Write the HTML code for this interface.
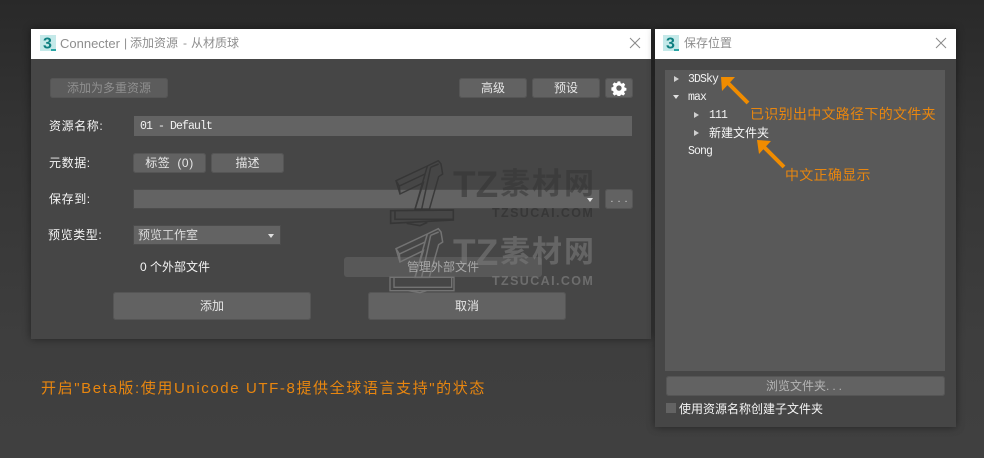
<!DOCTYPE html>
<html lang="zh-CN"><head><meta charset="utf-8">
<style>
html,body{margin:0;padding:0}
body{width:984px;height:458px;overflow:hidden;position:relative;background:linear-gradient(#292929 0,#333 120px,#3e3e3e 340px,#404040 458px);font-family:"Liberation Sans","WenQuanYi Zen Hei","Noto Sans CJK SC",sans-serif;font-size:12px;color:#f0f0f0}
.a{position:absolute;white-space:nowrap}
.win{position:absolute;background:#464646;box-shadow:0 0 8px rgba(0,0,0,.45)}
.bar{position:absolute;height:30px;background:#fff}
.ttl{position:absolute;color:#8e8e8e;font-size:12px;line-height:15px;white-space:nowrap}
.btn{position:absolute;background:#626262;border-radius:3px;box-shadow:inset 0 0 0 1px #555;text-align:center;color:#e6e6e6;white-space:nowrap}
.field{position:absolute;background:#636363}
.lab{position:absolute;color:#f4f4f4;line-height:16px;white-space:nowrap;letter-spacing:.6px}
.mono{font-family:"Liberation Mono","WenQuanYi Zen Hei",monospace;font-size:11.5px;letter-spacing:-.9px;color:#f2f2f2;line-height:14px;position:absolute;white-space:nowrap}
.or{position:absolute;color:#e8860f;white-space:nowrap;line-height:16px;font-size:14px;letter-spacing:.3px}
.tri{position:absolute;width:0;height:0}
.r{border-left:5px solid #cfcfcf;border-top:3px solid transparent;border-bottom:3px solid transparent}
.d{border-top:4px solid #e0e0e0;border-left:3.5px solid transparent;border-right:3.5px solid transparent}
</style></head><body>

<div class="win" style="left:31px;top:29px;width:620px;height:310px"></div>
<div class="bar" style="left:31px;top:29px;width:620px"></div>
<svg class="a" style="left:40px;top:35px" width="16" height="16" viewBox="0 0 16 16"><rect width="16" height="16" fill="#c4e9e9"/><text x="3" y="13.5" font-family="Liberation Sans" font-weight="700" font-size="16" fill="#0f8081">3</text><rect x="11" y="14" width="5" height="2" fill="#2aa5a5"/></svg>
<div class="ttl" style="left:60px;top:36px;font-size:13px">Connecter</div>
<div class="ttl" style="left:124px;top:36px">|</div>
<div class="ttl" style="left:130px;top:36px">添加资源</div>
<div class="ttl" style="left:183px;top:36px">-</div>
<div class="ttl" style="left:191px;top:36px">从材质球</div>
<svg class="a" style="left:629px;top:37px" width="12" height="12"><path d="M1 1L11 11M11 1L1 11" stroke="#8a8a8a" stroke-width="1" fill="none"/></svg>

<div class="btn" style="left:50px;top:78px;width:118px;height:20px;line-height:20px;color:#8f8f8f;background:#5c5c5c">添加为多重资源</div>
<div class="btn" style="left:459px;top:78px;width:68px;height:20px;line-height:20px">高级</div>
<div class="btn" style="left:532px;top:78px;width:68px;height:20px;line-height:20px">预设</div>
<div class="btn" style="left:605px;top:78px;width:28px;height:20px"></div>
<svg class="a" style="left:611px;top:80px" width="16" height="16" viewBox="0 0 16 16"><path fill="#fff" fill-rule="evenodd" d="M6.6 .8h2.8l.4 2 1.3.6 1.8-1 1.9 2.1-1.1 1.7.4 1.3 2 .5v2.8l-2 .5-.5 1.3 1.1 1.7-2 2-1.7-1.1-1.3.5-.4 1.9H6.6l-.5-1.9-1.3-.5-1.7 1.1-2-2 1.1-1.7-.5-1.3-1.9-.5V7.5l1.9-.5.5-1.3-1.1-1.7 2-2.1 1.7 1 1.3-.6zM8 5.2a2.9 2.9 0 1 0 0 5.8 2.9 2.9 0 0 0 0-5.8z" transform="translate(0.6 0.6) scale(.92)"/></svg>

<div class="lab" style="left:49px;top:118px">资源名称:</div>
<div class="field" style="left:134px;top:116px;width:498px;height:20px"></div>
<div class="mono" style="left:140px;top:120px">01 - Default</div>

<div class="lab" style="left:49px;top:155px">元数据:</div>
<div class="btn" style="left:133px;top:153px;width:73px;height:20px;line-height:20px;word-spacing:3px;letter-spacing:.6px">标签 (0)</div>
<div class="btn" style="left:211px;top:153px;width:73px;height:20px;line-height:20px">描述</div>

<div class="lab" style="left:49px;top:191px">保存到:</div>
<div class="field" style="left:133px;top:189px;width:467px;height:20px;box-shadow:inset 0 0 0 1px #4c4c4c"></div>
<div class="tri d" style="left:587px;top:198px"></div>
<div class="btn" style="left:605px;top:189px;width:28px;height:20px;line-height:20px;font-size:11px;letter-spacing:4px;text-indent:4px;color:#ccc">...</div>

<div class="lab" style="left:48px;top:227px">预览类型:</div>
<div class="field" style="left:133px;top:225px;width:148px;height:20px;box-shadow:inset 0 0 0 1px #4c4c4c"></div>
<div class="a" style="left:138px;top:227px;line-height:16px;color:#dcdcdc">预览工作室</div>
<div class="tri d" style="left:268px;top:234px"></div>

<div class="a" style="left:140px;top:259px;line-height:16px;color:#f4f4f4">0 个外部文件</div>
<div class="btn" style="left:344px;top:257px;width:198px;height:20px;line-height:20px;background:#585858;color:#a8a8a8;box-shadow:none"></div>

<div class="btn" style="left:113px;top:292px;width:198px;height:28px;line-height:28px">添加</div>
<div class="btn" style="left:368px;top:292px;width:198px;height:28px;line-height:28px">取消</div>

<div class="win" style="left:655px;top:29px;width:301px;height:398px"></div>
<div class="bar" style="left:655px;top:29px;width:301px"></div>
<svg class="a" style="left:663px;top:35px" width="16" height="16" viewBox="0 0 16 16"><rect width="16" height="16" fill="#c4e9e9"/><text x="3" y="13.5" font-family="Liberation Sans" font-weight="700" font-size="16" fill="#0f8081">3</text><rect x="11" y="14" width="5" height="2" fill="#2aa5a5"/></svg>
<div class="ttl" style="left:684px;top:36px">保存位置</div>
<svg class="a" style="left:935px;top:37px" width="12" height="12"><path d="M1 1L11 11M11 1L1 11" stroke="#8a8a8a" stroke-width="1" fill="none"/></svg>

<div class="field" style="left:665px;top:70px;width:280px;height:301px;background:#595959"></div>
<div class="tri r" style="left:674px;top:76px"></div>
<div class="mono" style="left:688px;top:73px">3DSky</div>
<div class="tri d" style="left:673px;top:95px"></div>
<div class="mono" style="left:688px;top:91px">max</div>
<div class="tri r" style="left:694px;top:112px"></div>
<div class="mono" style="left:709px;top:109px">111</div>
<div class="tri r" style="left:694px;top:130px"></div>
<div class="a" style="left:709px;top:125px;line-height:16px;color:#f6f6f6">新建文件夹</div>
<div class="mono" style="left:688px;top:145px">Song</div>

<svg class="a" style="left:700px;top:60px" width="110" height="120" viewBox="700 60 110 120">
<path d="M748 103L726 81" stroke="#f08c00" stroke-width="4" fill="none"/>
<path d="M721 77L735 77L722 91Z" fill="#f08c00"/>
<path d="M784 167L762 145" stroke="#f08c00" stroke-width="4" fill="none"/>
<path d="M757 140L771 141L759 154Z" fill="#f08c00"/>
</svg>
<div class="or" style="left:750px;top:106px">已识别出中文路径下的文件夹</div>
<div class="or" style="left:785px;top:167px">中文正确显示</div>

<div class="btn" style="left:666px;top:376px;width:279px;height:20px;line-height:20px;color:#b4b4b4">浏览文件夹<span style="letter-spacing:3px">...</span></div>
<div class="a" style="left:666px;top:403px;width:10px;height:10px;background:#636363"></div>
<div class="lab" style="left:679px;top:401px;letter-spacing:0">使用资源名称创建子文件夹</div>

<div class="or" style="left:41px;top:380px;font-size:15px;letter-spacing:1.6px;line-height:18px">开启"Beta版:使用Unicode UTF-8提供全球语言支持"的状态</div>

<!-- watermark -->
<svg class="a" style="left:340px;top:160px" width="320" height="190" viewBox="0 0 320 190">
<g>
<g fill="none" stroke="#343434" stroke-width="4.5" opacity=".85" transform="scale(.3333)">
<path d="M168 62L262 18L295 2L303 12L308 42L296 50L268 148L225 148L250 68L180 102Z"/>
<path d="M262 18L225 148M272 22L245 148M168 62L178 78L255 42M178 78L180 102M272 22L296 12"/>
<path d="M152 152L340 150V180L152 190ZM165 152V178L340 178M200 190L240 197L262 187" stroke-width="5"/>
</g>
<text x="113" y="37" font-family="Liberation Sans" font-weight="700" font-size="37" fill="#333" opacity=".55">TZ</text>
<text x="160" y="34" font-family="Noto Sans CJK SC" font-weight="700" font-size="30" fill="#333" opacity=".5" letter-spacing="2">素材网</text>
<text x="152" y="57" font-family="Liberation Sans" font-weight="700" font-size="12.5" fill="#333" opacity=".75" letter-spacing="1.4">TZSUCAI.COM</text>
</g>
<g>
<g fill="none" stroke="#7c7c7c" stroke-width="4.5" opacity=".85" transform="translate(0 68) scale(.3333)">
<path d="M168 62L262 18L295 2L303 12L308 42L296 50L268 148L225 148L250 68L180 102Z"/>
<path d="M262 18L225 148M272 22L245 148M168 62L178 78L255 42M178 78L180 102M272 22L296 12"/>
<path d="M150 148H342V188H150ZM162 148V178H335V148M205 188L240 194L262 188" stroke-width="4"/>
</g>
<text x="113" y="105" font-family="Liberation Sans" font-weight="700" font-size="37" fill="#7a7a7a" opacity=".6">TZ</text>
<text x="160" y="102" font-family="Noto Sans CJK SC" font-weight="700" font-size="30" fill="#7a7a7a" opacity=".6" letter-spacing="2">素材网</text>
<text x="152" y="125" font-family="Liberation Sans" font-weight="700" font-size="12.5" fill="#7a7a7a" opacity=".75" letter-spacing="1.4">TZSUCAI.COM</text>
</g>
</svg>
<div class="a" style="left:344px;top:257px;width:198px;height:20px;line-height:20px;text-align:center;color:#a8a8a8">管理外部文件</div>
</body></html>
